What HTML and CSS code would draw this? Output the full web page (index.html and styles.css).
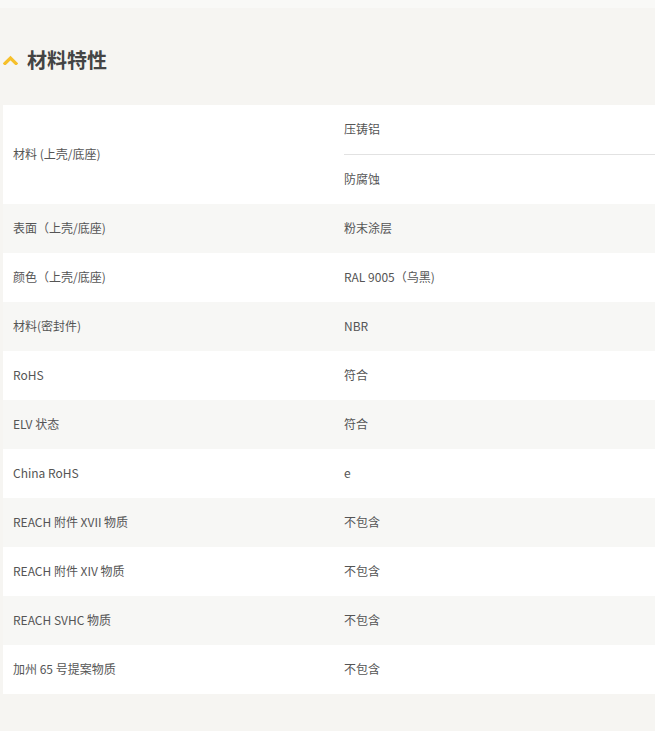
FILE: index.html
```html
<!DOCTYPE html>
<html lang="zh-CN">
<head>
<meta charset="utf-8">
<title>材料特性</title>
<link rel="stylesheet" href="styles.css">
</head>
<body>
<div class="topstrip"></div>
<section class="section">
  <h2 class="heading">
    <svg class="chev" width="15" height="10" viewBox="0 0 15 10"><path d="M2 8.5 L7.5 3 L13 8.5" fill="none" stroke="#f6c02b" stroke-width="3.2" stroke-linecap="square"/></svg>
    <span>材料特性</span>
  </h2>
  <table class="props">
    <tbody>
      <tr class="w">
        <td class="lab">材料 (上壳/底座)</td>
        <td class="val multi">
          <div class="sub">压铸铝</div>
          <div class="sub sep">防腐蚀</div>
        </td>
      </tr>
      <tr class="g"><td class="lab">表面（上壳/底座)</td><td class="val">粉末涂层</td></tr>
      <tr class="w"><td class="lab">颜色（上壳/底座)</td><td class="val">RAL 9005（乌黑)</td></tr>
      <tr class="g"><td class="lab">材料(密封件)</td><td class="val">NBR</td></tr>
      <tr class="w"><td class="lab">RoHS</td><td class="val">符合</td></tr>
      <tr class="g"><td class="lab">ELV 状态</td><td class="val">符合</td></tr>
      <tr class="w"><td class="lab">China RoHS</td><td class="val">e</td></tr>
      <tr class="g"><td class="lab">REACH 附件 XVII 物质</td><td class="val">不包含</td></tr>
      <tr class="w"><td class="lab">REACH 附件 XIV 物质</td><td class="val">不包含</td></tr>
      <tr class="g"><td class="lab">REACH SVHC 物质</td><td class="val">不包含</td></tr>
      <tr class="w"><td class="lab">加州 65 号提案物质</td><td class="val">不包含</td></tr>
    </tbody>
  </table>
</section>
</body>
</html>
```
FILE: styles.css
```css
html, body {
  margin: 0;
  padding: 0;
  background: #f6f5f2;
  font-family: "Noto Sans CJK SC", "DejaVu Sans", sans-serif;
  color: #555;
  overflow: hidden;
}
.topstrip {
  height: 8px;
  background: #f9f9f7;
}
.section {
  padding: 0 0 0 3px;
}
.heading {
  display: flex;
  align-items: center;
  gap: 9px;
  margin: 0;
  height: 97px;
  padding-left: 0;
  padding-top: 6px;
  box-sizing: border-box;
  font-size: 20px;
  font-weight: bold;
  color: #444;
  line-height: 1;
}
.chev {
  display: block;
}
.props {
  border-collapse: collapse;
  width: 652px;
  font-size: 12px;
}
.props td {
  padding: 0 0 2px 10px;
  height: 49px;
  box-sizing: border-box;
  vertical-align: middle;
  line-height: 16px;
}
.props td.lab {
  width: 331px;
}
.props tr.w td { background: #ffffff; }
.props tr.g td { background: #f7f7f5; }
.props td.val.multi {
  padding: 0 0 0 10px;
}
.sub {
  height: 49px;
  padding-bottom: 2px;
  box-sizing: border-box;
  display: flex;
  align-items: center;
}
.sub.sep {
  height: 50px;
  border-top: 1px solid #e2e2e2;
}
```
